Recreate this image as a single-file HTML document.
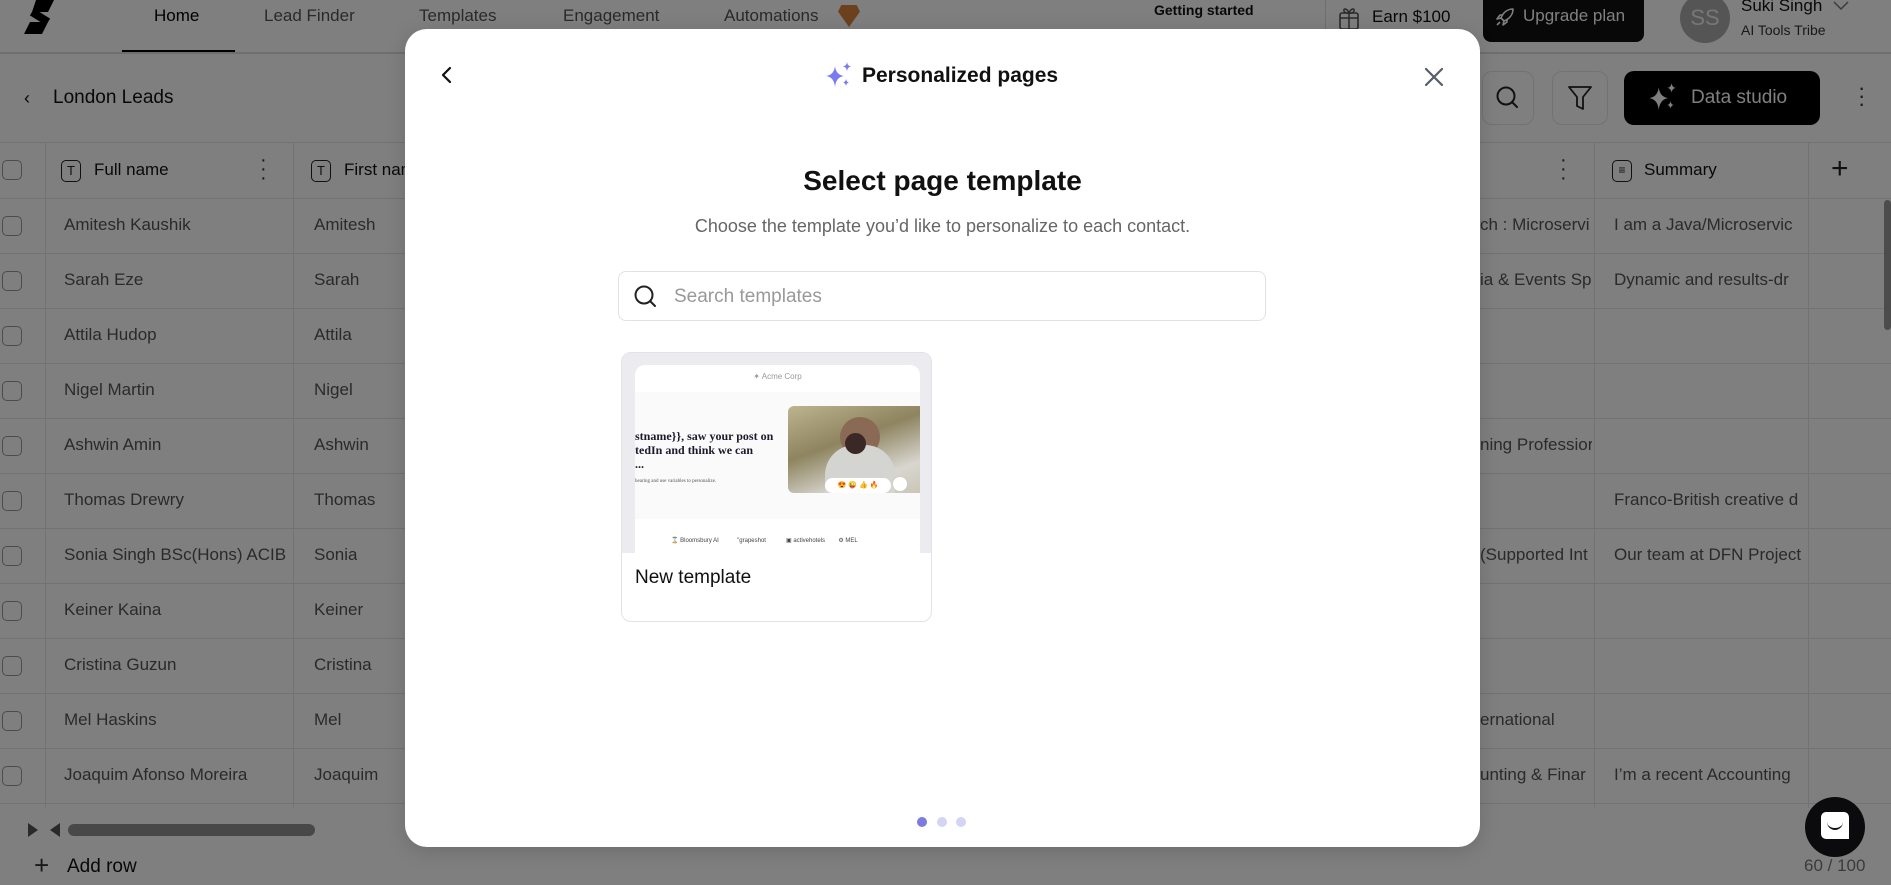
<!DOCTYPE html>
<html><head><meta charset="utf-8">
<style>
*{box-sizing:border-box;margin:0;padding:0}
body{width:1891px;height:885px;overflow:hidden;position:relative;background:#fff;font-family:"Liberation Sans",sans-serif;color:#222}
.a{position:absolute}
.nav{font-size:17px;color:#555;top:6px}
.cell{position:absolute;font-size:17px;color:#555;white-space:nowrap;overflow:hidden}
.hl{position:absolute;height:1px;background:#e4e4e4;left:0;width:1891px}
.vl{position:absolute;width:1px;background:#e4e4e4;top:142px;height:666px}
.cb{position:absolute;left:2px;width:20px;height:20px;border:1.5px solid #999;border-radius:5px}
.ov{position:absolute;inset:0;background:rgba(0,0,0,0.5)}
</style></head><body>
<svg class="a" style="left:22px;top:0" width="42" height="36" viewBox="0 0 42 36"><path d="M14 0h18l-6 12H10zM8 22h18l-6 12H2z" fill="#000"/><path d="M10 12l16 10" stroke="#000" stroke-width="8"/></svg>
<div class="nav a" style="left:154px;color:#000">Home</div>
<div class="a" style="left:122px;top:50px;width:113px;height:3px;background:#000"></div>
<div class="nav a" style="left:264px">Lead Finder</div>
<div class="nav a" style="left:419px">Templates</div>
<div class="nav a" style="left:563px">Engagement</div>
<div class="nav a" style="left:724px">Automations</div>
<div class="a" style="left:838px;top:5px;width:22px;height:22px;background:#d9823a;clip-path:polygon(15% 0,85% 0,100% 30%,50% 100%,0 30%)"></div>
<div class="a" style="left:1154px;top:2px;font-size:14px;color:#111;font-weight:bold">Getting started</div>
<div class="a" style="left:1325px;top:0;width:1px;height:40px;background:#ddd"></div>
<svg class="a" style="left:1338px;top:5px" width="22" height="26" viewBox="0 0 22 26"><rect x="2" y="8" width="18" height="16" rx="2" fill="none" stroke="#555" stroke-width="1.6"/><path d="M2 13h18M11 8v16M11 8C9 3 5 3 6 6s5 2 5 2c0 0 4 1 5-2s-3-3-5 2" fill="none" stroke="#555" stroke-width="1.5"/></svg>
<div class="a" style="left:1372px;top:7px;font-size:17px;color:#111">Earn $100</div>
<div class="a" style="left:1483px;top:-8px;width:161px;height:50px;background:#111;border-radius:8px;color:#fff;font-size:17px;padding:14px 0 0 40px">Upgrade plan</div>
<svg class="a" style="left:1494px;top:6px" width="22" height="22" viewBox="0 0 22 22"><path d="M19 3C13 3 9 7 7 12l3 3c5-2 9-6 9-12zM7 12l-4 1 3-4 3 0M10 15l-1 4 4-3 0-3M6 16l-3 3" fill="none" stroke="#fff" stroke-width="1.6" stroke-linejoin="round"/></svg>
<div class="a" style="left:1680px;top:-7px;width:50px;height:50px;border-radius:50%;background:#aaa;color:#eee;font-size:22px;text-align:center;line-height:50px">SS</div>
<div class="a" style="left:1741px;top:-4px;font-size:17px;color:#111">Suki Singh</div>
<svg class="a" style="left:1832px;top:0" width="18" height="12" viewBox="0 0 18 12"><path d="M2 2l7 7 7-7" fill="none" stroke="#777" stroke-width="1.5"/></svg>
<div class="a" style="left:1741px;top:22px;font-size:14px;color:#333">AI Tools Tribe</div>
<div class="hl" style="top:52px;background:#ddd;height:2px"></div>

<div class="a" style="left:24px;top:88px;font-size:18px;color:#111">‹</div>
<div class="a" style="left:53px;top:87px;font-size:19px;color:#111">London Leads</div>
<div class="a" style="left:1482px;top:71px;width:52px;height:54px;border:1px solid #e5e5e5;border-radius:10px"></div>
<svg class="a" style="left:1495px;top:85px" width="26" height="26" viewBox="0 0 26 26"><circle cx="11" cy="11" r="8.5" fill="none" stroke="#222" stroke-width="2"/><path d="M17 17l5 5" stroke="#222" stroke-width="2" stroke-linecap="round"/></svg>
<div class="a" style="left:1552px;top:71px;width:56px;height:54px;border:1px solid #e5e5e5;border-radius:10px"></div>
<svg class="a" style="left:1567px;top:84px" width="26" height="28" viewBox="0 0 26 28"><path d="M2 3h22l-8 10v12l-6-3V13z" fill="none" stroke="#222" stroke-width="1.8" stroke-linejoin="round"/></svg>
<div class="a" style="left:1624px;top:71px;width:196px;height:54px;background:#000;border-radius:10px;color:#fff;font-size:19px;padding:16px 0 0 67px">Data studio</div>
<svg class="a" style="left:1648px;top:82px" width="30" height="30" viewBox="0 0 28 28"><path d="M10 5Q11 14 19 15Q11 16 10 26Q9 16 1 15Q9 14 10 5Z" fill="#fff"/><path d="M22 1Q22.5 5 26 5.5Q22.5 6 22 10Q21.5 6 18 5.5Q21.5 5 22 1Z" fill="#fff"/><path d="M21 18Q21.5 21 24 21.5Q21.5 22 21 25Q20.5 22 18 21.5Q20.5 21 21 18Z" fill="#fff"/></svg>
<div class="a" style="left:1858px;top:84px;font-size:22px;color:#333;line-height:8px">·<br>·<br>·</div>

<div class="hl" style="top:142px"></div>
<div class="hl" style="top:198px"></div>
<div class="vl" style="left:45px"></div>
<div class="vl" style="left:293px"></div>
<div class="vl" style="left:1594px"></div>
<div class="vl" style="left:1808px"></div>
<div class="cb" style="top:160px"></div>
<div class="a" style="left:61px;top:160px;width:20px;height:22px;border:1.5px solid #222;border-radius:5px;font-size:13px;text-align:center;line-height:19px;color:#222">T</div>
<div class="a" style="left:94px;top:160px;font-size:17px;color:#111">Full name</div>
<div class="a" style="left:260px;top:156px;font-size:20px;line-height:9px;color:#333">·<br>·<br>·</div>
<div class="a" style="left:311px;top:160px;width:20px;height:22px;border:1.5px solid #222;border-radius:5px;font-size:13px;text-align:center;line-height:19px;color:#222">T</div>
<div class="a" style="left:344px;top:160px;font-size:17px;color:#111">First name</div>
<div class="a" style="left:1560px;top:156px;font-size:20px;line-height:9px;color:#333">·<br>·<br>·</div>
<div class="a" style="left:1612px;top:160px;width:20px;height:22px;border:1.5px solid #222;border-radius:5px;font-size:12px;text-align:center;line-height:19px;color:#222">≡</div>
<div class="a" style="left:1644px;top:160px;font-size:17px;color:#111">Summary</div>
<div class="a" style="left:1831px;top:152px;font-size:30px;color:#222">+</div>

<div id="rows"></div>
<script>
var d=[["Amitesh Kaushik","Amitesh","ch : Microservi","I am a Java/Microservic"],["Sarah Eze","Sarah","ia & Events Sp","Dynamic and results-dr"],["Attila Hudop","Attila","",""],["Nigel Martin","Nigel","",""],["Ashwin Amin","Ashwin","ning Professior",""],["Thomas Drewry","Thomas","","Franco-British creative d"],["Sonia Singh BSc(Hons) ACIB","Sonia","(Supported Int","Our team at DFN Project"],["Keiner Kaina","Keiner","",""],["Cristina Guzun","Cristina","",""],["Mel Haskins","Mel","ernational",""],["Joaquim Afonso Moreira","Joaquim","unting & Finar","I’m a recent Accounting"]];
var h="";d.forEach(function(r,i){var y=198+i*55;
h+='<div class="cb" style="top:'+(y+18)+'px"></div>';
h+='<div class="cell" style="left:64px;top:'+(y+17)+'px;width:225px">'+r[0]+'</div>';
h+='<div class="cell" style="left:314px;top:'+(y+17)+'px">'+r[1]+'</div>';
h+='<div class="cell" style="left:1480px;top:'+(y+17)+'px;width:112px">'+r[2]+'</div>';
h+='<div class="cell" style="left:1614px;top:'+(y+17)+'px;width:192px">'+r[3]+'</div>';
h+='<div class="hl" style="top:'+(y+55)+'px"></div>';});
document.getElementById("rows").innerHTML=h;
</script>
<div class="a" style="left:28px;top:823px;width:0;height:0;border-left:10px solid #555;border-top:7px solid transparent;border-bottom:7px solid transparent"></div>
<div class="a" style="left:50px;top:823px;width:0;height:0;border-right:10px solid #555;border-top:7px solid transparent;border-bottom:7px solid transparent"></div>
<div class="a" style="left:68px;top:824px;width:247px;height:12px;background:#909090;border-radius:6px"></div>
<div class="a" style="left:34px;top:850px;font-size:26px;color:#333;font-weight:300">+</div>
<div class="a" style="left:67px;top:856px;font-size:19px;color:#111">Add row</div>
<div class="a" style="left:1804px;top:856px;font-size:17px;color:#777">60 / 100</div>
<div class="a" style="left:1884px;top:200px;width:7px;height:130px;background:#999;border-radius:4px"></div>

<div class="ov"></div>

<div class="a" style="left:1805px;top:797px;width:60px;height:60px;border-radius:50%;background:#0b0b0d"></div>
<div class="a" style="left:1821px;top:812px;width:28px;height:27px;background:#fff;border-radius:5px 5px 0 5px"></div>
<div class="a" style="left:1827px;top:822px;width:16px;height:8px;border-bottom:2px solid #111;border-radius:0 0 8px 8px"></div>

<div class="a" style="left:405px;top:29px;width:1075px;height:818px;background:#fff;border-radius:22px;box-shadow:0 4px 20px rgba(0,0,0,.15)">
  <svg class="a" style="left:34px;top:36px" width="16" height="20" viewBox="0 0 16 20"><path d="M11 3L4 10l7 7" fill="none" stroke="#111" stroke-width="2.2" stroke-linecap="round" stroke-linejoin="round"/></svg>
  <svg class="a" style="left:420px;top:32px" width="28" height="28" viewBox="0 0 28 28"><path d="M10 5Q11 14 19 15Q11 16 10 26Q9 16 1 15Q9 14 10 5Z" fill="#7b7bf0"/><path d="M22 1Q22.5 5 26 5.5Q22.5 6 22 10Q21.5 6 18 5.5Q21.5 5 22 1Z" fill="#7b7bf0"/><path d="M21 18Q21.5 21 24 21.5Q21.5 22 21 25Q20.5 22 18 21.5Q20.5 21 21 18Z" fill="#7b7bf0"/></svg>
  <div class="a" style="left:457px;top:35px;font-size:21px;font-weight:bold;color:#111">Personalized pages</div>
  <svg class="a" style="left:1018px;top:37px" width="22" height="22" viewBox="0 0 22 22"><path d="M3 3L19 19M19 3L3 19" stroke="#555d6b" stroke-width="2.2" stroke-linecap="round"/></svg>
  <div class="a" style="left:0;width:1075px;top:136px;text-align:center;font-size:28px;font-weight:bold;color:#111">Select page template</div>
  <div class="a" style="left:0;width:1075px;top:187px;text-align:center;font-size:18px;color:#666">Choose the template you’d like to personalize to each contact.</div>
  <div class="a" style="left:213px;top:242px;width:648px;height:50px;border:1px solid #e2e2e2;border-radius:8px">
    <svg class="a" style="left:14px;top:12px" width="26" height="26" viewBox="0 0 26 26"><circle cx="11" cy="11" r="8.5" fill="none" stroke="#222" stroke-width="2"/><path d="M17 17l5 5" stroke="#222" stroke-width="2" stroke-linecap="round"/></svg>
    <div class="a" style="left:55px;top:14px;font-size:19px;color:#999">Search templates</div>
  </div>
  <div class="a" style="left:216px;top:323px;width:311px;height:270px;border:1px solid #e3e3e6;border-radius:10px;overflow:hidden;background:#fff">
    <div class="a" style="left:0;top:0;width:311px;height:200px;background:#ececf0"></div>
    <div class="a" style="left:13px;top:12px;width:285px;height:188px;background:#fff;border-radius:10px 10px 0 0;overflow:hidden">
      <div class="a" style="left:0;width:285px;top:7px;text-align:center;font-size:8px;color:#999">✦ Acme Corp</div>
      <div class="a" style="left:0;top:27px;width:285px;height:127px;background:#fafafb"></div>
      <div class="a" style="left:0;top:64px;font-family:'Liberation Serif',serif;font-weight:bold;font-size:12px;line-height:14px;color:#1a1a2a">stname}}, saw your post on<br>tedIn and think we can<br>...</div>
      <div class="a" style="left:0;top:114px;font-family:'Liberation Serif',serif;font-size:5px;color:#555">hearing and use variables to personalize.</div>
      <div class="a" style="left:153px;top:41px;width:140px;height:87px;border-radius:6px;overflow:hidden;background:linear-gradient(160deg,#bdb58f 0%,#8e8460 40%,#d8d6cf 75%,#c9c4b4 100%)">
        <div class="a" style="left:52px;top:11px;width:40px;height:40px;border-radius:50%;background:#8a6a55"></div>
        <div class="a" style="left:37px;top:39px;width:70px;height:48px;border-radius:30px 30px 0 0;background:#d4d4d0"></div>
        <div class="a" style="left:57px;top:27px;width:21px;height:21px;border-radius:50%;background:#3a2826"></div>
      </div>
      <div class="a" style="left:190px;top:113px;width:66px;height:15px;border-radius:8px;background:#fff;font-size:7px;line-height:15px;text-align:center">😍 😜 👍 🔥</div>
      <div class="a" style="left:258px;top:112px;width:14px;height:14px;border-radius:50%;background:#fff;box-shadow:0 0 2px #ccc"></div>
      <div class="a" style="left:36px;top:172px;font-size:6px;color:#444;white-space:nowrap">⌛ Bloomsbury AI &nbsp;&nbsp;&nbsp;&nbsp;&nbsp;&nbsp;&nbsp;&nbsp;&nbsp; "grapeshot &nbsp;&nbsp;&nbsp;&nbsp;&nbsp;&nbsp;&nbsp;&nbsp;&nbsp;&nbsp; ▣ activehotels &nbsp;&nbsp;&nbsp;&nbsp;&nbsp;&nbsp; ⚙ MEL</div>
    </div>
    <div class="a" style="left:13px;top:214px;font-size:19px;color:#111">New template</div>
  </div>
  <div class="a" style="left:512px;top:788px;width:10px;height:10px;border-radius:50%;background:#7b7be0"></div>
  <div class="a" style="left:532px;top:788px;width:10px;height:10px;border-radius:50%;background:#d4d4f4"></div>
  <div class="a" style="left:551px;top:788px;width:10px;height:10px;border-radius:50%;background:#d4d4f4"></div>
</div>
</body></html>
